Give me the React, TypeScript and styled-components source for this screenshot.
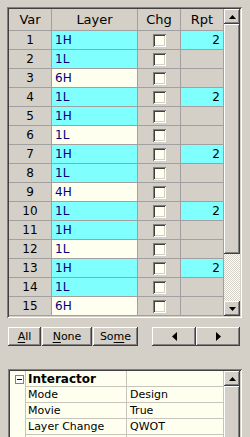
import React from "react";
import styled, { createGlobalStyle } from "styled-components";

const FACE = "#d4d0c8";
const CYAN = "#80ffff";
const CREAM = "#fffff0";
const LINE = "#a0a0a0";

const raised = `box-shadow: inset -1px -1px #404040, inset 1px 1px #ffffff, inset -2px -2px #808080, inset 2px 2px ${FACE};`;
const sunken = `box-shadow: inset 1px 1px #808080, inset -1px -1px #ffffff, inset 2px 2px #404040, inset -2px -2px ${FACE};`;

const GlobalStyle = createGlobalStyle`
  html, body {
    margin: 0;
    padding: 0;
    background: ${FACE};
    overflow: hidden;
    font-family: "DejaVu Sans", Verdana, sans-serif;
  }
`;

const Page = styled.div`
  box-sizing: border-box;
  height: 437px;
  padding: 7px 0 0 7px;
  overflow: hidden;
`;

const GridFrame = styled.div`
  box-sizing: border-box;
  width: 235px;
  height: 311px;
  padding: 2px;
  display: flex;
  ${sunken}
`;

const Table = styled.div`
  width: 215px;
  display: grid;
  grid-template-columns: 43px 86px 43px 43px;
  grid-template-rows: 22px;
  grid-auto-rows: 19px;
`;

const Cell = styled.div`
  box-sizing: border-box;
  display: flex;
  align-items: center;
  border-right: 1px solid ${LINE};
  border-bottom: 1px solid ${LINE};
  font-size: 12px;
  color: #000;
  white-space: nowrap;
  overflow: hidden;
`;

const HeadCell = styled(Cell)`
  background: ${FACE};
  justify-content: center;
  font-size: 13px;
`;

const VarCell = styled(Cell)`
  background: ${FACE};
  justify-content: center;
`;

const LayerCell = styled(Cell)<{ $tone: "cyan" | "cream" }>`
  background: ${(p) => (p.$tone === "cyan" ? CYAN : CREAM)};
  color: #000080;
  padding-left: 3px;
`;

const ChgCell = styled(Cell)`
  background: ${FACE};
  justify-content: center;
`;

const Check = styled.span`
  box-sizing: border-box;
  width: 13px;
  height: 13px;
  background: ${CREAM};
  ${sunken}
`;

const RptCell = styled(Cell)<{ $filled: boolean }>`
  background: ${(p) => (p.$filled ? CYAN : FACE)};
  justify-content: flex-end;
  padding-right: 3px;
`;

const ScrollBar = styled.div`
  width: 16px;
  display: flex;
  flex-direction: column;
`;

const ScrollButton = styled.div`
  box-sizing: border-box;
  height: 15px;
  flex: none;
  display: flex;
  align-items: center;
  justify-content: center;
  background: ${FACE};
  ${raised}
`;

const Thumb = styled.div<{ $h?: number }>`
  box-sizing: border-box;
  height: ${(p) => (p.$h ? `${p.$h}px` : "auto")};
  flex: ${(p) => (p.$h ? "none" : "1")};
  background: ${FACE};
  ${raised}
`;

const Track = styled.div`
  flex: 1;
  background: repeating-conic-gradient(#ffffff 0 25%, ${FACE} 0 50%) 0 0 / 2px 2px;
`;

const ButtonBar = styled.div`
  display: flex;
  margin-top: 9px;
  padding-left: 1px;
  height: 19px;
`;

const Button = styled.div<{ $w: number; $gap?: number }>`
  box-sizing: border-box;
  width: ${(p) => p.$w}px;
  height: 19px;
  margin-left: ${(p) => p.$gap ?? 0}px;
  display: flex;
  align-items: center;
  justify-content: center;
  font-size: 11px;
  color: #000;
  background: ${FACE};
  ${raised}

  u {
    text-decoration-thickness: 1px;
    text-underline-offset: 2px;
  }
`;

const PropFrame = styled.div`
  box-sizing: border-box;
  width: 234px;
  height: 90px;
  margin: 23px 0 0 1px;
  padding: 2px;
  display: flex;
  background: ${CREAM};
  ${sunken}
`;

const PropBody = styled.div`
  width: 214px;
  display: flex;
  flex-direction: column;
`;

const PropRow = styled.div`
  display: grid;
  grid-template-columns: 16px 101px 97px;
  height: 16px;
  font-size: 11px;
  color: #000;
`;

const Gutter = styled.div`
  box-sizing: border-box;
  display: flex;
  align-items: center;
  justify-content: center;
  border-right: 1px solid #c8c4bc;
`;

const PropCell = styled.div<{ $bold?: boolean; $pad: number }>`
  box-sizing: border-box;
  display: flex;
  align-items: center;
  padding-left: ${(p) => p.$pad}px;
  border-right: 1px solid #c8c4bc;
  border-bottom: 1px solid #c8c4bc;
  font-weight: ${(p) => (p.$bold ? "bold" : "normal")};
  font-size: ${(p) => (p.$bold ? "12px" : "11px")};
  white-space: nowrap;
  overflow: hidden;
`;

const MinusBox = styled.span`
  box-sizing: border-box;
  width: 9px;
  height: 9px;
  margin-left: 3px;
  border: 1px solid #808080;
  background: #ffffff;
  display: flex;
  align-items: center;
  justify-content: center;

  &::after {
    content: "";
    width: 5px;
    height: 1px;
    background: #000;
  }
`;

function UpArrow() {
  return (
    <svg width="7" height="4" viewBox="0 0 7 4">
      <path d="M3.5 0 L7 4 L0 4 Z" fill="#000" />
    </svg>
  );
}

function DownArrow() {
  return (
    <svg width="7" height="4" viewBox="0 0 7 4">
      <path d="M0 0 L7 0 L3.5 4 Z" fill="#000" />
    </svg>
  );
}

function SideArrow({ dir }: { dir: "left" | "right" }) {
  return (
    <svg width="5" height="9" viewBox="0 0 5 9">
      {dir === "left" ? (
        <path d="M5 0 L5 9 L0 4.5 Z" fill="#000" />
      ) : (
        <path d="M0 0 L5 4.5 L0 9 Z" fill="#000" />
      )}
    </svg>
  );
}

type Row = { layer: string; tone: "cyan" | "cream"; rpt?: number };

const rows: Row[] = [
  { layer: "1H", tone: "cyan", rpt: 2 },
  { layer: "1L", tone: "cyan" },
  { layer: "6H", tone: "cream" },
  { layer: "1L", tone: "cyan", rpt: 2 },
  { layer: "1H", tone: "cyan" },
  { layer: "1L", tone: "cream" },
  { layer: "1H", tone: "cyan", rpt: 2 },
  { layer: "1L", tone: "cyan" },
  { layer: "4H", tone: "cream" },
  { layer: "1L", tone: "cyan", rpt: 2 },
  { layer: "1H", tone: "cyan" },
  { layer: "1L", tone: "cream" },
  { layer: "1H", tone: "cyan", rpt: 2 },
  { layer: "1L", tone: "cyan" },
  { layer: "6H", tone: "cream" },
];

const props = [
  ["Mode", "Design"],
  ["Movie", "True"],
  ["Layer Change", "QWOT"],
  ["", ""],
];

export default function App() {
  return (
    <Page>
      <GlobalStyle />
      <GridFrame>
        <Table>
          <HeadCell>Var</HeadCell>
          <HeadCell>Layer</HeadCell>
          <HeadCell>Chg</HeadCell>
          <HeadCell>Rpt</HeadCell>
          {rows.map((r, i) => (
            <React.Fragment key={i}>
              <VarCell>{i + 1}</VarCell>
              <LayerCell $tone={r.tone}>{r.layer}</LayerCell>
              <ChgCell>
                <Check />
              </ChgCell>
              <RptCell $filled={!!r.rpt}>{r.rpt ?? ""}</RptCell>
            </React.Fragment>
          ))}
        </Table>
        <ScrollBar>
          <ScrollButton>
            <UpArrow />
          </ScrollButton>
          <Thumb $h={230} />
          <Track />
          <ScrollButton>
            <DownArrow />
          </ScrollButton>
        </ScrollBar>
      </GridFrame>

      <ButtonBar>
        <Button $w={33}>
          <u>A</u>ll
        </Button>
        <Button $w={50} $gap={1}>
          <u>N</u>one
        </Button>
        <Button $w={45} $gap={1}>
          So<u>m</u>e
        </Button>
        <Button $w={44} $gap={14}>
          <SideArrow dir="left" />
        </Button>
        <Button $w={44}>
          <SideArrow dir="right" />
        </Button>
      </ButtonBar>

      <PropFrame>
        <PropBody>
          <PropRow>
            <Gutter>
              <MinusBox />
            </Gutter>
            <PropCell $bold $pad={2}>
              Interactor
            </PropCell>
            <PropCell $pad={3} />
          </PropRow>
          {props.map(([k, v], i) => (
            <PropRow key={i}>
              <Gutter />
              <PropCell $pad={2}>{k}</PropCell>
              <PropCell $pad={3}>{v}</PropCell>
            </PropRow>
          ))}
        </PropBody>
        <ScrollBar>
          <ScrollButton>
            <UpArrow />
          </ScrollButton>
          <Thumb />
        </ScrollBar>
      </PropFrame>
    </Page>
  );
}
